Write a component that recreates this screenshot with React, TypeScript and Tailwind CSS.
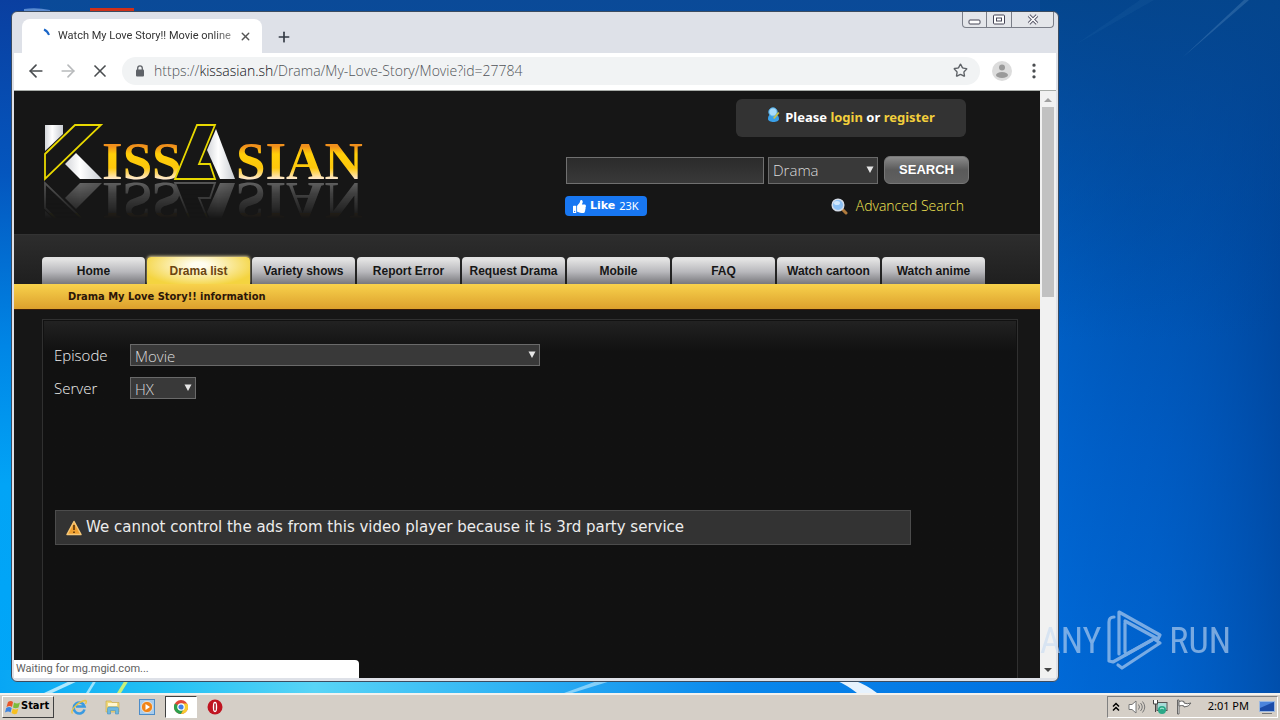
import { useState } from 'react';
import type { ReactNode } from 'react';
import { ArrowLeft, ArrowRight, ChevronsUp, MoreVertical, Plus, Star, X } from 'lucide-react';
import { FaThumbsUp } from 'react-icons/fa';

const NAV_ITEMS = [
  'Home',
  'Drama list',
  'Variety shows',
  'Report Error',
  'Request Drama',
  'Mobile',
  'FAQ',
  'Watch cartoon',
  'Watch anime',
];

interface SelectBoxProps {
  id: string;
  label?: string;
  options: string[];
  className: string;
}

function SelectBox({ id, label, options, className }: SelectBoxProps) {
  const [value, setValue] = useState(options[0]);
  return (
    <div className={`relative ${className}`}>
      <select
        id={id}
        aria-label={label}
        value={value}
        onChange={(e) => setValue(e.target.value)}
        className="block h-full w-full appearance-none border border-[#6a6a6a] bg-[#393939] px-1 text-[#dcdcdc] outline-none"
      >
        {options.map((o) => (
          <option key={o}>{o}</option>
        ))}
      </select>
      <svg viewBox="0 0 8 8" className="pointer-events-none absolute top-1/2 right-1 h-2 w-2 -translate-y-1/2" aria-hidden="true">
        <path d="M0.5 0.5h7L4 7z" fill="#e6e6e6" />
      </svg>
    </div>
  );
}

function Wallpaper() {
  return (
    <svg viewBox="0 0 1280 693" preserveAspectRatio="none" className="absolute inset-0 h-full w-full" aria-hidden="true">
      <defs>
        <linearGradient id="wpBase" x1="0" y1="0" x2="0" y2="1">
          <stop offset="0" stopColor="#0a4a98" />
          <stop offset="0.3" stopColor="#0050a8" />
          <stop offset="0.65" stopColor="#005cc4" />
          <stop offset="1" stopColor="#0068d6" />
        </linearGradient>
        <linearGradient id="wpLeft" x1="0" y1="0" x2="0" y2="1">
          <stop offset="0" stopColor="#0a3fa0" />
          <stop offset="0.25" stopColor="#0456be" />
          <stop offset="0.5" stopColor="#0086e6" />
          <stop offset="0.7" stopColor="#02a4f6" />
          <stop offset="1" stopColor="#00a6f8" />
        </linearGradient>
        <linearGradient id="wpRight" x1="0" y1="0" x2="1" y2="0">
          <stop offset="0" stopColor="#0070e0" stopOpacity="0.4" />
          <stop offset="0.45" stopColor="#0058bc" stopOpacity="0.25" />
          <stop offset="1" stopColor="#003e90" stopOpacity="0.6" />
        </linearGradient>
        <linearGradient id="wpTop" x1="0" y1="0" x2="0" y2="1">
          <stop offset="0" stopColor="#04458c" stopOpacity="0.95" />
          <stop offset="1" stopColor="#0048a0" stopOpacity="0" />
        </linearGradient>
        <linearGradient id="wpBottom" x1="0" y1="0" x2="1" y2="0">
          <stop offset="0" stopColor="#08a6f4" />
          <stop offset="0.15" stopColor="#22c0f4" />
          <stop offset="0.3" stopColor="#58d4f6" />
          <stop offset="0.5" stopColor="#2cb0f4" />
          <stop offset="0.7" stopColor="#0a88ec" />
          <stop offset="1" stopColor="#0070e0" />
        </linearGradient>
      </defs>
      <rect width="1280" height="693" fill="url(#wpBase)" />
      <rect x="1040" width="240" height="693" fill="url(#wpRight)" />
      <rect x="1040" width="240" height="340" fill="url(#wpTop)" />
      <rect width="40" height="693" fill="url(#wpLeft)" />
      <rect y="670" width="1050" height="23" fill="url(#wpBottom)" />
      <path d="M1182 58L1244 0h5z" fill="#5a8cc0" opacity="0.35" />
      <path d="M1075 45L1140 0h14z" fill="#3a78b8" opacity="0.12" />
      <path d="M44 693L72 680h8L52 693z" fill="#d8f6ff" opacity="0.8" />
      <path d="M86 693l8-13h3l-8 13z" fill="#bff0ff" opacity="0.8" />
      <path d="M117 693l8-13h4l-8 13z" fill="#c8f07a" />
      <path d="M564 693l36-13h14l-42 13z" fill="#c4ecff" opacity="0.6" />
      <path d="M835 680h18q14 5 24 13h-20q-10-8-22-13z" fill="#ffffff" opacity="0.9" />
      <path d="M24 9q12-2 26 1v2H24z" fill="#5a8ad0" />
      <path d="M90 8h44v4H90z" fill="#d03018" />
    </svg>
  );
}

function SiteLogo() {
  return (
    <a href="#home" aria-label="KissAsian" className="relative block h-[90px] w-80">
      <svg
        viewBox="0 0 320 58"
        className="block h-[58px] w-80 overflow-visible [-webkit-box-reflect:below_0px_linear-gradient(transparent_35%,rgba(255,255,255,0.36))]"
      >
        <defs>
          <linearGradient id="gold" x1="0" y1="0" x2="0" y2="1">
            <stop offset="0.25" stopColor="#f0901c" />
            <stop offset="0.38" stopColor="#ffcf08" />
            <stop offset="0.62" stopColor="#fdc70c" />
            <stop offset="0.8" stopColor="#ffe8c8" />
          </linearGradient>
          <linearGradient id="silver" x1="0" y1="0" x2="1" y2="0">
            <stop offset="0" stopColor="#d4d6da" />
            <stop offset="0.4" stopColor="#ffffff" />
            <stop offset="1" stopColor="#c8ccd2" />
          </linearGradient>
        </defs>
        <path d="M1 2h18v9L1 28z" fill="url(#silver)" />
        <path d="M32 30L58 56H36L21 41z" fill="url(#silver)" />
        <path d="M31 2h26L1 56V31z" fill="#171717" stroke="#e8d800" strokeWidth="1.8" />
        <text x="58" y="56" fontSize="53" className="font-['Liberation_Serif',serif] font-bold" fill="url(#gold)">ISS</text>
        <text x="192" y="56" fontSize="53" className="font-['Liberation_Serif',serif] font-bold" fill="url(#gold)">SIAN</text>
        <path d="M172 6L191 56h-15L163 27z" fill="url(#silver)" />
        <path d="M153 2h18L155 41h11l5 15h-40z" fill="#171717" stroke="#e8d800" strokeWidth="1.8" />
      </svg>
      <span className="absolute inset-x-0 top-[58px] h-8 backdrop-grayscale" />
    </a>
  );
}

function UserIcon() {
  return (
    <svg viewBox="0 0 14 16" className="h-4 w-3.5 shrink-0" aria-hidden="true">
      <path d="M1 12c0-4 2-5 5-5s6 1 6 5c0 4-11 4-11 0z" fill="#3aa0e8" />
      <circle cx="6" cy="5" r="4.200" fill="#a8dcfa" stroke="#4aa8e4" />
      <path d="M6 11l5-6 1.500 1L7.500 12z" fill="#c8c04a" />
    </svg>
  );
}

function SearchIcon() {
  return (
    <svg viewBox="0 0 17 17" className="h-[17px] w-[17px] shrink-0" aria-hidden="true">
      <path d="M11 11l4 4" stroke="#b07a3c" strokeWidth="3" strokeLinecap="round" />
      <circle cx="7" cy="7" r="5.800" fill="#8cc0f4" stroke="#d4dce8" strokeWidth="1.500" />
      <ellipse cx="6" cy="5" rx="3" ry="2" fill="#cfe6fc" />
    </svg>
  );
}

function WarningIcon() {
  return (
    <svg viewBox="0 0 16 16" className="h-4 w-4 shrink-0" aria-hidden="true">
      <path d="M8 1.500L15 14.500H1z" fill="#f0a030" stroke="#f6c878" strokeWidth="1.500" strokeLinejoin="round" />
      <path d="M8 5v5M8 11.500v1.500" stroke="#5a3408" strokeWidth="1.600" />
    </svg>
  );
}

function TabStrip() {
  return (
    <div className="flex h-[41px] items-end pl-2">
      <div className="flex h-[34px] w-60 items-center rounded-t-lg bg-white pr-2.5 pl-4">
        <svg viewBox="0 0 16 16" className="h-4 w-4 shrink-0" aria-hidden="true">
          <path d="M6 1.500Q9.500 3 11 7" fill="none" stroke="#1a66c8" strokeWidth="2" />
        </svg>
        <span className="ml-1 flex-1 font-['Roboto',sans-serif] text-[11px] whitespace-nowrap text-[#333] [mask-image:linear-gradient(to_right,black_85%,rgba(0,0,0,0.35))]">
          Watch My Love Story!! Movie online
        </span>
        <button aria-label="Close tab" className="text-[#555]">
          <X size={13} strokeWidth={2.5} />
        </button>
      </div>
      <button aria-label="New tab" className="mb-2 ml-3.5 text-[#333a44]">
        <Plus size={16} strokeWidth={2.5} />
      </button>
      <div className="mr-0.5 ml-auto flex h-4 self-start rounded-b border border-t-0 border-[#7a7e88] bg-[#e4e6ea]">
        <button aria-label="Minimize" className="flex w-6 items-center justify-center border-r border-[#7a7e88]">
          <svg viewBox="0 0 13 11" className="h-[11px] w-[13px]"><rect x="1" y="6" width="11" height="4" rx="1" fill="#fff" stroke="#445" /></svg>
        </button>
        <button aria-label="Maximize" className="flex w-[25px] items-center justify-center border-r border-[#7a7e88]">
          <svg viewBox="0 0 12 11" className="h-[11px] w-3">
            <rect x="0.5" y="1" width="11" height="9" rx="1" fill="#fff" stroke="#445" />
            <rect x="3.500" y="4" width="5" height="3" fill="#fff" stroke="#445" />
          </svg>
        </button>
        <button aria-label="Close" className="flex w-[41px] items-center justify-center">
          <svg viewBox="0 0 12 11" className="h-[11px] w-3">
            <path d="M2 1.500l8 8M10 1.500l-8 8" stroke="#556" strokeWidth="3.400" />
            <path d="M2 1.500l8 8M10 1.500l-8 8" stroke="#fff" strokeWidth="1.600" />
          </svg>
        </button>
      </div>
    </div>
  );
}

function Toolbar() {
  return (
    <div className="flex h-[38px] shrink-0 items-center border-b border-[#a8aca8] bg-white px-3 pb-0.5">
      <button aria-label="Back" className="text-[#4a4d50]"><ArrowLeft size={20} /></button>
      <button aria-label="Forward" className="ml-3 text-[#b8babc]"><ArrowRight size={20} /></button>
      <button aria-label="Stop" className="ml-3 text-[#4a4d50]"><X size={20} /></button>
      <div className="ml-3 flex h-7 flex-1 items-center rounded-full bg-[#f1f3f4] px-3">
        <svg viewBox="0 0 12 12" className="h-3 w-3" aria-hidden="true">
          <rect x="2" y="4.500" width="8" height="7" rx="1" fill="#5f6368" />
          <path d="M3.700 5V3.200a2.300 2.300 0 0 1 4.600 0V5" fill="none" stroke="#5f6368" strokeWidth="1.300" />
        </svg>
        <p className="ml-2 flex-1 font-['Open_Sans',sans-serif] text-sm font-light text-[#505458]">
          https://<span className="text-[#101114]">kissasian.sh</span>/Drama/My-Love-Story/Movie?id=27784
        </p>
        <button aria-label="Bookmark" className="text-[#5f6368]"><Star size={15} strokeWidth={2.2} /></button>
      </div>
      <button aria-label="Profile" className="ml-3">
        <svg viewBox="0 0 20 20" className="h-5 w-5">
          <circle cx="10" cy="10" r="10" fill="#dcdcdc" />
          <circle cx="10" cy="6.500" r="3" fill="#9a9a9a" />
          <ellipse cx="10" cy="14" rx="6" ry="3" fill="#9a9a9a" />
        </svg>
      </button>
      <button aria-label="Menu" className="ml-3 text-[#4a4d50]"><MoreVertical size={20} strokeWidth={2} /></button>
    </div>
  );
}

function SiteHeader() {
  return (
    <header className="flex h-[143px] items-start justify-between pr-[71px] pl-[30px]">
      <div className="pt-8"><SiteLogo /></div>
      <div className="flex w-[404px] flex-col pt-2">
        <div className="mr-[3px] flex h-[38px] w-[230px] justify-center gap-1 self-end rounded-md bg-[#333] pt-2">
          <UserIcon />
          <p className="font-['Noto_Sans',sans-serif] text-[13px] leading-5 font-bold text-white">
            Please <a href="#login" className="text-[#f2cf3c]">login</a> or <a href="#register" className="text-[#f2cf3c]">register</a>
          </p>
        </div>
        <form className="mt-[19px] flex h-7 items-center" onSubmit={(e) => e.preventDefault()}>
          <input
            type="text"
            aria-label="Search"
            className="ml-px h-[27px] w-0 flex-1 border border-[#707070] bg-linear-to-b from-[#2b2b2b] to-[#393939] px-1 text-sm text-white outline-none"
          />
          <SelectBox id="type" label="Type" options={['Drama', 'Cast']} className="ml-1 h-[27px] w-[110px] font-['Open_Sans',sans-serif] text-[15px] font-light" />
          <button className="ml-1.5 h-7 w-[85px] rounded-md border border-[#777] bg-linear-to-b from-[#8c8c8c] via-[#5a5a5a] to-[#606060] font-['Liberation_Sans',Arial,sans-serif] text-[13px] font-bold text-white">
            SEARCH
          </button>
        </form>
        <div className="mt-3 flex h-5 items-center justify-between pr-[5px]">
          <button className="flex h-5 items-center gap-1 rounded-sm bg-[#1877f2] px-2 text-[11px] text-white">
            <FaThumbsUp size={13} />
            <span className="font-['DejaVu_Sans',sans-serif] font-bold">Like</span>
            <span>23K</span>
          </button>
          <a href="#advanced" className="flex items-center gap-2 font-['Open_Sans',sans-serif] text-sm font-light text-[#f4e654]">
            <SearchIcon />
            Advanced Search
          </a>
        </div>
      </div>
    </header>
  );
}

function SiteNav() {
  return (
    <nav className="flex h-[50px] items-end gap-0.5 border-t border-[#333] bg-linear-to-b from-[#2d2d2d] to-[#1f1f1f] pl-7 font-['Liberation_Sans',Arial,sans-serif] text-xs font-bold">
      {NAV_ITEMS.map((item) => (
        <a
          key={item}
          href="#"
          className={`flex h-[27px] w-[103px] items-center justify-center rounded-t whitespace-nowrap ${
            item === 'Drama list'
              ? 'bg-radial-[at_50%_30%] from-[#fffdf0] from-10% to-[#f4d440] to-80% text-[#6a4410] shadow-[0_-1px_3px_#d8c890]'
              : 'bg-linear-to-b from-[#e2e2e2] from-10% via-[#b8b8bc] via-55% to-[#78787c] text-[#161616]'
          }`}
        >
          {item}
        </a>
      ))}
    </nav>
  );
}

function PlayerPanel() {
  return (
    <section className="mt-[9px] mr-[22px] ml-7 flex flex-1 flex-col border border-b-0 border-[#303030] bg-[#111] p-px">
      <div className="flex flex-1 flex-col bg-linear-to-b from-[#222] to-[#111] to-[30px] pt-[23px] pl-2.5 text-[#f0f0f0]">
        <div className="flex h-[22px] items-center font-['Open_Sans',sans-serif] text-[15px] font-light">
          <label htmlFor="episode" className="w-[76px]">Episode</label>
          <SelectBox id="episode" options={['Movie']} className="h-[22px] w-[410px]" />
        </div>
        <div className="mt-[11px] flex h-[22px] items-center font-['Open_Sans',sans-serif] text-[15px] font-light">
          <label htmlFor="server" className="w-[76px]">Server</label>
          <SelectBox id="server" options={['HX', 'FE']} className="h-[22px] w-[66px]" />
        </div>
        <p className="mt-[111px] mr-[105px] ml-px flex h-[35px] items-center gap-1 border border-[#4c4c4c] bg-[#333] pl-2.5 font-['DejaVu_Sans',Verdana,sans-serif] text-[15px] text-[#ececec]">
          <WarningIcon />
          We cannot control the ads from this video player because it is 3rd party service
        </p>
      </div>
    </section>
  );
}

function ScrollBar() {
  return (
    <div className="flex w-4 shrink-0 flex-col items-center bg-[#f1f1f1]">
      <svg viewBox="0 0 16 16" className="h-4 w-4"><path d="M4 11l4-4 4 4z" fill="#a0a0a0" /></svg>
      <div className="h-[190px] w-3 bg-[#c1c1c1]" />
      <svg viewBox="0 0 16 16" className="mt-auto h-4 w-4"><path d="M4 6l4 4 4-4z" fill="#444" /></svg>
    </div>
  );
}

function BrowserWindow() {
  return (
    <div className="relative flex w-full flex-col rounded-md border border-[#3c4c60] bg-[#dee1e8] px-0.5 pb-[3px]">
      <TabStrip />
      <Toolbar />
      <div className="relative flex min-h-0 flex-1">
        <main className="flex min-w-0 flex-1 flex-col bg-[#161616]">
          <SiteHeader />
          <SiteNav />
          <h1 className="border-b border-[#3a1c08] bg-linear-to-b from-[#f8d24c] to-[#dca02c] pl-[54px] font-['DejaVu_Sans_Condensed','DejaVu_Sans',sans-serif] text-[11px] leading-[25px] font-bold text-[#2c1608]">
            Drama My Love Story!! information
          </h1>
          <PlayerPanel />
        </main>
        <ScrollBar />
        <div className="absolute bottom-0 left-0 h-[18px] w-[345px] rounded-tr bg-white px-0.5 font-['Roboto',sans-serif] text-[11px] leading-[18px] text-[#606060]">
          Waiting for mg.mgid.com...
        </div>
      </div>
    </div>
  );
}

function Watermark() {
  return (
    <div className="absolute right-[49px] bottom-5 flex items-center gap-1.5 font-['Roboto_Condensed','Liberation_Sans_Narrow','Roboto',sans-serif] text-4xl leading-none text-[#c8dcf4] opacity-60">
      <span>ANY</span>
      <svg viewBox="0 0 56 64" className="h-16 w-14 shrink-0" fill="none" stroke="currentColor" strokeWidth="3.2" strokeLinejoin="round" strokeLinecap="round" aria-hidden="true">
        <path d="M7 8Q2 8 2 13v39l4 1 39-22M12 45V3l41 23-2 4-33-18" />
        <path d="M18 14v29M47 30l6 4-38 25-4-3M45 31L18 46" />
      </svg>
      <span>RUN</span>
    </div>
  );
}

function TaskButton({ label, active, children }: { label: string; active?: boolean; children: ReactNode }) {
  return (
    <button
      aria-label={label}
      className={`flex h-[22px] w-8 items-center justify-center ${active ? 'border border-t-[#404040] border-r-white border-b-white border-l-[#404040] bg-white' : ''}`}
    >
      <svg viewBox="0 0 16 16" className="h-4 w-4">{children}</svg>
    </button>
  );
}

function Taskbar() {
  return (
    <footer className="relative flex h-[27px] shrink-0 items-center border-t-2 border-[#f4f2ee] bg-[#d5cfc7] px-0.5 pb-0.5">
      <button className="flex h-[22px] w-[52px] items-center border border-t-white border-r-[#404040] border-b-[#404040] border-l-white pl-0.5 font-['DejaVu_Sans_Condensed','DejaVu_Sans',sans-serif] text-[11px] font-bold text-black">
        <svg viewBox="0 0 16 16" className="h-4 w-4 shrink-0" aria-hidden="true">
          <path d="M3 3q3-2 5 0L7 8Q5 6 1.500 8z" fill="#e8562a" />
          <path d="M9 3.500q3 2 6 0L13.500 8.500q-3 1.500-5.500 0z" fill="#7cbc3c" />
          <path d="M1.200 9q3-2 5.500 0L5.500 13.500q-2-2-5.500 0z" fill="#3c84e0" />
          <path d="M7.800 9.500q3 2 5.500 0L12 14.500q-3 1.500-5.500-.5z" fill="#f8c020" />
        </svg>
        Start
      </button>
      <div className="ml-[9px] flex gap-0.5">
        <TaskButton label="Internet Explorer">
          <path d="M13.500 10.500A5.500 5.500 0 1 1 13.500 7.500H5" fill="none" stroke="#3a9ae0" strokeWidth="2.6" />
          <path d="M1.500 14.500C-1 12 6 3 14 1.500q2.500 0 .5 3.500" fill="none" stroke="#ecc440" strokeWidth="1.3" />
        </TaskButton>
        <TaskButton label="Windows Explorer">
          <path d="M1 2h5l1 1.500h7V13H1z" fill="#f0d878" stroke="#c8a848" strokeWidth="0.6" />
          <path d="M3 4h9v3H3z" fill="#fff6d0" />
          <path d="M2.500 15V9.500q0-1.500 1.500-1.500h8q1.500 0 1.500 1.500V15h-3v-3.500h-5V15z" fill="#6cb8e0" stroke="#4a90c0" strokeWidth="0.6" />
        </TaskButton>
        <TaskButton label="Media Player">
          <rect x="0.5" y="0.5" width="15" height="15" fill="#a8ccec" stroke="#4c8cc8" />
          <circle cx="8" cy="8" r="5.6" fill="#f08418" stroke="#fff" strokeWidth="0.6" />
          <path d="M6.500 5l4.500 3-4.500 3z" fill="#fff" />
        </TaskButton>
        <TaskButton label="Chrome" active>
          <circle cx="8" cy="8" r="7" fill="#e04838" />
          <path d="M8 8L1.900 4.500A7 7 0 0 0 8 15l3-5.300z" fill="#2ca04c" />
          <path d="M8 8l3 1.700L8 15A7 7 0 0 0 14.100 4.500H8z" fill="#f8cc30" />
          <circle cx="8" cy="8" r="3.2" fill="#4080e8" stroke="#fff" strokeWidth="1.2" />
        </TaskButton>
        <TaskButton label="Opera">
          <circle cx="8" cy="8" r="7.5" fill="#c01420" />
          <ellipse cx="8" cy="8" rx="2.2" ry="5.2" fill="#fff" />
          <path d="M8 4.500v7" stroke="#a00c18" strokeWidth="1.5" />
        </TaskButton>
      </div>
      <div className="ml-auto flex h-[22px] items-center border border-t-[#808080] border-r-white border-b-white border-l-[#808080] pr-0.5 pl-1 text-[11px] text-black">
        <svg viewBox="0 0 8 10" className="h-2.5 w-2" fill="none" stroke="#000" strokeWidth="1.5" aria-hidden="true">
          <path d="M1 4.500l3-3 3 3M1 8.500l3-3 3 3" />
        </svg>
        <svg viewBox="0 0 18 16" className="ml-2 h-4 w-[18px]" fill="none" stroke="#777" aria-hidden="true">
          <path d="M1 5.500h3L8 2v12L4 10.500H1z" fill="#fff" />
          <path d="M10.500 5.500q2 2.500 0 5M12.500 4q3.500 4 0 8M14.500 2.500q4.500 5.500 0 11" />
        </svg>
        <svg viewBox="0 0 16 16" className="ml-1.5 h-4 w-4" aria-hidden="true">
          <rect x="5" y="3.500" width="10" height="8" fill="#a8dcd8" stroke="#555" />
          <path d="M1.500 1v4h4V1M3.500 5v8" fill="#fff" stroke="#444" />
          <circle cx="10" cy="11" r="4" fill="#2aa888" />
          <path d="M8 10q2-2 4 0" stroke="#b8f0e0" fill="none" />
        </svg>
        <svg viewBox="0 0 16 16" className="ml-2 h-4 w-4" fill="#fff" stroke="#666" aria-hidden="true">
          <path d="M1.500 1v14h1.500V1z" />
          <path d="M3 2.500q3-1 5 0v1.500q3 1.500 7 0-2 4-7 4v-1q-2-1-5 0z" />
        </svg>
        <time className="ml-4">2:01 PM</time>
        <svg viewBox="0 0 16 14" className="ml-2.5 h-3.5 w-4" aria-hidden="true">
          <rect x="0.5" y="1.500" width="15" height="10" fill="#1c4ca8" stroke="#9cb8e0" />
          <path d="M1 2h14L1 8z" fill="#4c84dc" />
          <path d="M3 13.500h10" stroke="#777" />
        </svg>
      </div>
    </footer>
  );
}

export default function App() {
  return (
    <div className="flex h-screen flex-col overflow-hidden font-['Noto_Sans','Liberation_Sans',sans-serif]">
      <div className="relative flex min-h-0 flex-1 pt-[11px] pr-[221px] pb-[11px] pl-[11px]">
        <Wallpaper />
        <BrowserWindow />
        <Watermark />
      </div>
      <Taskbar />
    </div>
  );
}
